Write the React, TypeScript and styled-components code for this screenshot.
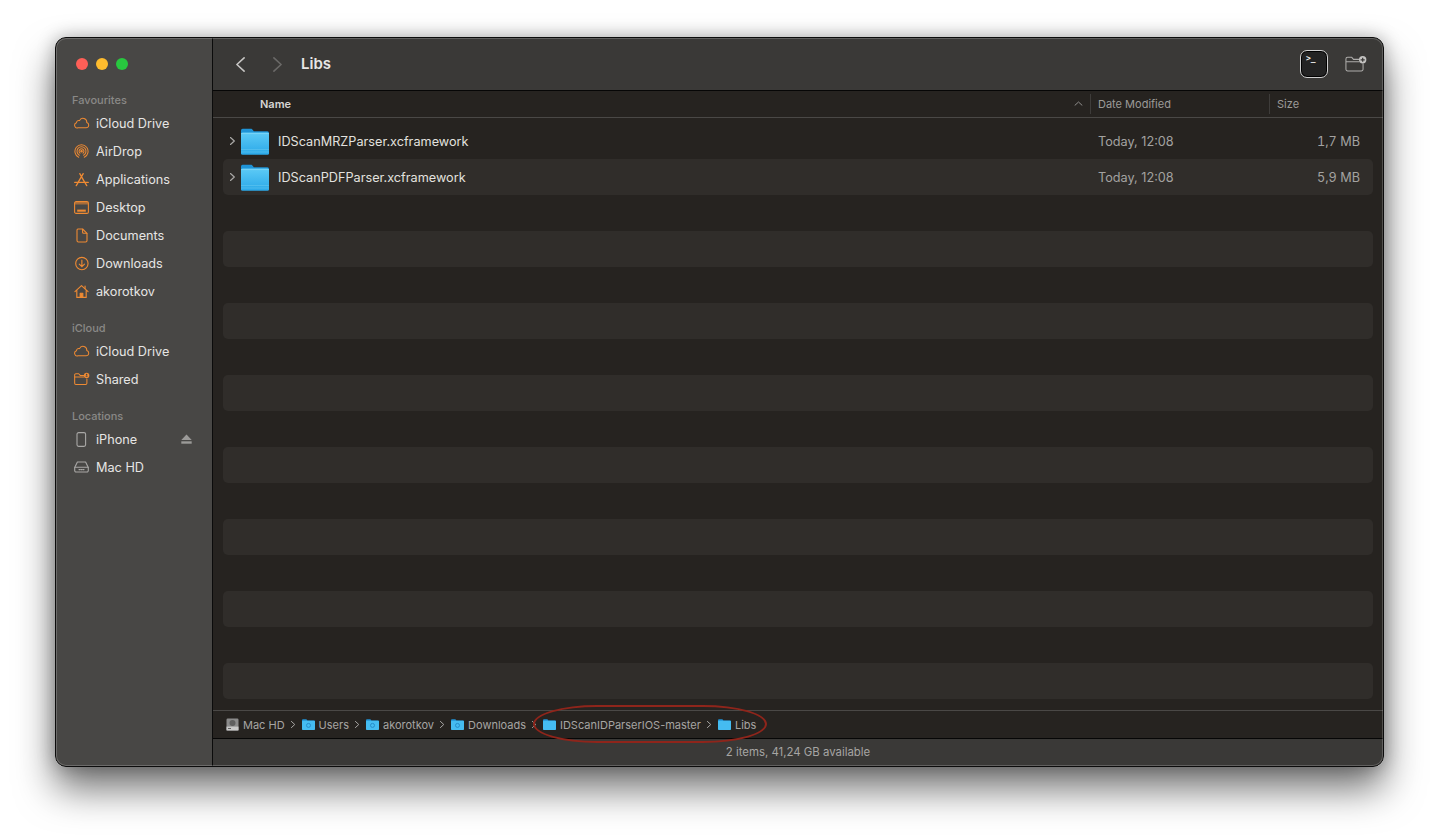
import React from "react";
import styled, { createGlobalStyle } from "styled-components";

const Global = createGlobalStyle`
  html, body { margin: 0; padding: 0; background: #fff; height: 100%; overflow: hidden; }
  body { font-family: Inter, "Noto Sans", "Liberation Sans", sans-serif; -webkit-font-smoothing: antialiased; }
`;

const Page = styled.div`
  width: 1439px;
  height: 840px;
  padding: 37px 0 0 55px;
  box-sizing: border-box;
`;
const Win = styled.div`
  position: relative;
  width: 1329px;
  height: 730px;
  box-sizing: border-box;
  border: 1px solid #0c0c0c;
  border-radius: 11px;
  display: flex;
  overflow: hidden;
  background: #3a3937;
`;
const WinShadow = styled.div`
  width: 1329px;
  height: 730px;
  border-radius: 11px;
  box-shadow: 0 22px 38px rgba(0, 0, 0, 0.55), 0 0 18px rgba(0, 0, 0, 0.28);
`;
const Rim = styled.div`
  position: absolute;
  inset: 0;
  border-radius: 10px;
  box-shadow: inset 0 0 0 1px rgba(255, 255, 255, 0.2);
  pointer-events: none;
  z-index: 3;
`;
const Sidebar = styled.aside`
  width: 156px;
  flex: none;
  background: #484745;
  border-right: 1px solid #0b0b0b;
  padding: 20px 0 0 0;
  box-sizing: content-box;
`;
const Lights = styled.div`
  display: flex;
  gap: 8px;
  padding-left: 20px;
  height: 12px;
`;
const Light = styled.span<{ $c: string }>`
  width: 12px;
  height: 12px;
  border-radius: 50%;
  background: ${(p) => p.$c};
`;
const Section = styled.section<{ $top: number }>`
  margin-top: ${(p) => p.$top}px;
`;
const SectionTitle = styled.div`
  height: 14px;
  line-height: 14px;
  padding-left: 16px;
  font-size: 11px;
  font-weight: 500;
  color: #8a8987;
  margin-bottom: 2px;
`;
const Item = styled.div`
  height: 28px;
  display: flex;
  align-items: center;
  position: relative;
  font-size: 12.7px;
  color: #e6e5e4;
  font-weight: 400;
`;
const ItemIcon = styled.span`
  width: 40px;
  padding-left: 18px;
  box-sizing: border-box;
  height: 28px;
  flex: none;
  display: flex;
  align-items: center;
  color: #ee8a33;
`;
const GreyIcon = styled(ItemIcon)`
  color: #a9a8a6;
`;
const Eject = styled.span`
  margin-left: auto;
  margin-right: 20px;
  display: flex;
  color: #9b9a98;
`;
const Main = styled.main`
  flex: 1;
  min-width: 0;
  display: flex;
  flex-direction: column;
`;
const Toolbar = styled.header`
  height: 52px;
  flex: none;
  background: #3a3937;
  border-bottom: 1px solid #060606;
  display: flex;
  align-items: center;
  padding: 0 16px 0 23px;
`;
const NavBtn = styled.span<{ $w: number }>`
  width: ${(p) => p.$w}px;
  display: flex;
  flex: none;
`;
const Title = styled.h1`
  margin: 0 0 2px;
  font-size: 15px;
  font-weight: 600;
  color: #e8e7e6;
  flex: 1;
`;
const Terminal = styled.div`
  width: 28px;
  height: 28px;
  box-sizing: border-box;
  border: 1px solid #cfcfcf;
  border-radius: 7px;
  background: #232323;
  box-shadow: inset 0 0 0 1px #000;
  font-family: "DejaVu Sans Mono", monospace;
  font-size: 8px;
  font-weight: 700;
  line-height: 10px;
  color: #f2f2f2;
  padding: 3px 0 0 5px;
  margin-right: 17px;
`;
const Header = styled.div`
  height: 25px;
  padding-bottom: 1px;
  flex: none;
  box-sizing: content-box;
  background: #262320;
  border-bottom: 1px solid #4a4846;
  display: grid;
  grid-template-columns: 877px 179px 1fr;
  align-items: center;
  font-size: 11px;
  color: #9c9a98;
`;
const HeadCell = styled.div<{ $sep?: boolean }>`
  height: 20px;
  line-height: 20px;
  padding-left: 7px;
  border-left: ${(p) => (p.$sep ? "1px solid #3e3c3a" : "0")};
`;
const NameHead = styled.div`
  display: flex;
  align-items: center;
  justify-content: space-between;
  padding: 0 7px 0 47px;
  font-weight: 600;
  color: #d6d5d3;
`;
const List = styled.div`
  flex: 1;
  background: #262320;
  padding: 5px 10px 0;
  overflow: hidden;
`;
const Row = styled.div<{ $alt: boolean }>`
  height: 36px;
  border-radius: 5px;
  background: ${(p) => (p.$alt ? "#302d2a" : "transparent")};
  display: grid;
  grid-template-columns: 875px 1fr auto;
  align-items: center;
  padding-right: 13px;
  font-size: 12.7px;
  color: #e2e1df;
`;
const NameCell = styled.div`
  display: flex;
  align-items: center;
`;
const Caret = styled.span`
  width: 18px;
  padding-left: 7px;
  box-sizing: border-box;
  flex: none;
  display: flex;
`;
const FolderWrap = styled.span`
  width: 37px;
  flex: none;
  display: flex;
`;
const Dim = styled.div`
  color: #a3a2a0;
`;
const SizeText = styled(Dim)`
  font-variant-numeric: tabular-nums;
`;
const PathBar = styled.div`
  height: 29px;
  flex: none;
  position: relative;
  box-sizing: border-box;
  background: #262320;
  border-top: 1px solid #4a4846;
  border-bottom: 1px solid #060606;
  display: flex;
  align-items: center;
  padding-left: 13px;
  font-size: 11px;
  color: #a6a5a3;
`;
const Crumb = styled.span`
  display: flex;
  align-items: center;
  gap: 4px;
`;
const Sep = styled.span`
  display: flex;
  width: 17px;
  justify-content: center;
`;
const Circle = styled.div`
  position: absolute;
  left: 320px;
  top: -6px;
  width: 234px;
  height: 38px;
  box-sizing: border-box;
  border: 2px solid #8f251b;
  border-radius: 64px / 19px;
  pointer-events: none;
`;
const Status = styled.footer`
  flex: none;
  height: 27px;
  padding-bottom: 2px;
  box-sizing: border-box;
  background: #3a3937;
  display: flex;
  align-items: center;
  justify-content: center;
  font-size: 11.4px;
  color: #a6a5a3;
`;

const S = { fill: "none", stroke: "currentColor", strokeWidth: 1.1, strokeLinecap: "round", strokeLinejoin: "round" } as const;

const Cloud = () => (
  <svg width="16" height="12" viewBox="0 0 18 14" {...S} strokeWidth="1.2">
    <path d="M4.4 12.6h9.3a3.1 3.1 0 0 0 .8-6.1 4.4 4.4 0 0 0-8.4-2.3 2.6 2.6 0 0 0-3.5 2.5 2.9 2.9 0 0 0 1.8 5.9z" />
  </svg>
);
const AirDrop = () => (
  <svg width="15" height="15" viewBox="0 0 16 16" {...S}>
    <path d="M5 14.2a7 7 0 1 1 6 0" />
    <path d="M5.7 12a4.8 4.8 0 1 1 4.6 0" />
    <path d="M6.4 9.8a2.6 2.6 0 1 1 3.2 0" />
    <circle cx="8" cy="7.7" r=".8" fill="currentColor" />
  </svg>
);
const Apps = () => (
  <svg width="15" height="15" viewBox="0 0 16 15" {...S} strokeWidth="1.4">
    <path d="M6.2 1.2l5.2 9.4M9.8 1.2L4.4 10.6" />
    <path d="M.8 10.6h14.4" />
    <path d="M2.4 14l1.6-2.6M13.6 14l-1.6-2.6" />
  </svg>
);
const Desktop = () => (
  <svg width="15" height="13" viewBox="0 0 15 13">
    <rect x=".6" y=".6" width="13.8" height="11.8" rx="1.5" fill="none" stroke="currentColor" strokeWidth="1.1" />
    <path d="M.6 2.2a1.5 1.5 0 0 1 1.5-1.5h10.8a1.5 1.5 0 0 1 1.5 1.5v1.3H.6z" fill="currentColor" opacity=".55" />
    <rect x="3.2" y="8.6" width="8.6" height="2.1" fill="currentColor" />
  </svg>
);
const Doc = () => (
  <svg width="15" height="15" viewBox="0 0 15 15" {...S}>
    <path d="M4 1h4.6L13 5.4v7.2a1.4 1.4 0 0 1-1.4 1.4H4.4A1.4 1.4 0 0 1 3 12.6V2.2A1.2 1.2 0 0 1 4 1z" />
    <path d="M8.6 1.2v3a1 1 0 0 0 1 1h3.2" />
  </svg>
);
const Down = () => (
  <svg width="15" height="15" viewBox="0 0 16 16" {...S} strokeWidth="1.2">
    <circle cx="8.4" cy="8" r="6.6" />
    <path d="M8.4 4.4v7M5.6 8.6l2.8 2.8 2.8-2.8" />
  </svg>
);
const Home = () => (
  <svg width="15" height="15" viewBox="0 0 16 15" {...S} strokeWidth="1.2">
    <path d="M1 7.6L8 1.2l7 6.4M3 6.2v7.6h10V6.2" />
    <path d="M6.6 13.5V9.4h2.8v4.1z" fill="currentColor" />
    <path d="M11.8 1.6v2.8" />
  </svg>
);
const Shared = () => (
  <svg width="16" height="14" viewBox="0 0 17 14">
    <g {...S}>
      <path d="M10.4 3.2H6.6L5 1.4H2A1.3 1.3 0 0 0 .7 2.7v8.8a1.3 1.3 0 0 0 1.3 1.3h10.4a1.3 1.3 0 0 0 1.3-1.3V7" />
      <path d="M.8 4.9h9.6" />
    </g>
    <circle cx="13.4" cy="3.2" r="2.9" fill="currentColor" />
    <circle cx="13.4" cy="2.3" r=".8" fill="#484745" />
    <rect x="12.3" y="3.4" width="2.2" height="1.2" rx=".5" fill="#484745" />
  </svg>
);
const Phone = () => (
  <svg width="15" height="15" viewBox="0 0 15 15" {...S}>
    <rect x="3" y=".6" width="8.6" height="13.8" rx="1.6" />
  </svg>
);
const Disk = () => (
  <svg width="15" height="12" viewBox="0 0 15 12" {...S}>
    <path d="M3.4 1h8.2l2.7 5.4v3.2a1.4 1.4 0 0 1-1.4 1.4H2.1A1.4 1.4 0 0 1 .7 9.6V6.4z" />
    <path d="M.9 6.2h13.2" />
    <path d="M5 8.6h5" strokeDasharray="1 1" />
  </svg>
);
const EjectIcon = () => (
  <svg width="11" height="10" viewBox="0 0 11 10" fill="currentColor">
    <path d="M5.5 .4L10.7 6H.3z" />
    <rect x=".3" y="7.3" width="10.4" height="2.4" />
  </svg>
);
const Chevron = ({ dir, size, color, w = 1.6 }: { dir: "l" | "r"; size: number; color: string; w?: number }) => (
  <svg width={size * 0.6} height={size} viewBox="0 0 6 10" fill="none" stroke={color} strokeWidth={w} strokeLinecap="round" strokeLinejoin="round">
    <path d={dir === "l" ? "M5.4 .6L.6 5l4.8 4.4" : "M.6 .6L5.4 5 .6 9.4"} vectorEffect="non-scaling-stroke" />
  </svg>
);
const NewFolder = () => (
  <svg width="22" height="16" viewBox="0 0 23 17">
    <g fill="none" stroke="#aeadab" strokeWidth="1.1" strokeLinejoin="round">
      <path d="M15.4 3.6H8.8L7 1.4H2.6A1.8 1.8 0 0 0 .8 3.2v10.9a1.8 1.8 0 0 0 1.8 1.8h14.6a1.8 1.8 0 0 0 1.8-1.8V8" />
      <path d="M.9 6.2h14.4" />
    </g>
    <circle cx="18.6" cy="4" r="3.9" fill="#c4c3c1" />
    <path d="M18.6 1.8v4.4M16.4 4h4.4" stroke="#3a3937" strokeWidth="1.3" />
  </svg>
);
const BigFolder = ({ id }: { id: string }) => (
  <svg width="28" height="27" viewBox="0 0 28 27">
    <defs>
      <linearGradient id={id} x1="0" y1="0" x2="0" y2="1">
        <stop offset="0" stopColor="#5ccaf6" />
        <stop offset="1" stopColor="#2aa8e8" />
      </linearGradient>
    </defs>
    <path d="M0 2.4A1.6 1.6 0 0 1 1.6.8h8.2c.9 0 1.4.5 2 1.2l1 1.2H26.4A1.6 1.6 0 0 1 28 4.8v5H0z" fill="#1f93d6" />
    <rect x="0" y="4.6" width="28" height="22.2" rx="1.5" fill={`url(#${id})`} />
    <path d="M0 5.6h28" stroke="#86daf9" strokeWidth=".7" />
    <path d="M0 21.5h28M0 24h28" stroke="#6bcbf2" strokeWidth=".7" opacity=".7" />
  </svg>
);
const TinyFolder = ({ glyph }: { glyph?: boolean }) => (
  <svg width="13" height="11" viewBox="0 0 13 11">
    <path d="M0 1.2A1 1 0 0 1 1 .2h3.4l1 1.2H12a1 1 0 0 1 1 1V4H0z" fill="#1f93d6" />
    <rect y="1.8" width="13" height="9.2" rx=".8" fill="#45bcf1" />
    {glyph && <circle cx="6.5" cy="6.4" r="2" fill="none" stroke="#2288c6" strokeWidth=".9" />}
  </svg>
);
const TinyDisk = () => (
  <svg width="13" height="13" viewBox="0 0 13 13">
    <rect x=".5" y=".5" width="12" height="12" rx="1.2" fill="#8b8b8b" />
    <rect x=".5" y="8.6" width="12" height="3.9" fill="#c8c8c8" />
    <circle cx="6.5" cy="5" r="3" fill="#5f5f5f" />
    <path d="M2 10.5h3" stroke="#555" strokeWidth=".9" />
  </svg>
);
const SmallSep = () => (
  <Sep>
    <Chevron dir="r" size={7} color="#a6a5a3" w={1} />
  </Sep>
);

const favourites: [React.ReactNode, string][] = [
  [<Cloud />, "iCloud Drive"],
  [<AirDrop />, "AirDrop"],
  [<Apps />, "Applications"],
  [<Desktop />, "Desktop"],
  [<Doc />, "Documents"],
  [<Down />, "Downloads"],
  [<Home />, "akorotkov"],
];

const rows = [
  { name: "IDScanMRZParser.xcframework", size: "1,7 MB" },
  { name: "IDScanPDFParser.xcframework", size: "5,9 MB" },
];
const rowCount = 16;

export default function App() {
  return (
    <Page>
      <Global />
      <WinShadow>
        <Win>
          <Rim />
          <Sidebar>
            <Lights>
              <Light $c="#fe5f57" />
              <Light $c="#febc2e" />
              <Light $c="#28c83f" />
            </Lights>
            <Section $top={23}>
              <SectionTitle>Favourites</SectionTitle>
              {favourites.map(([icon, label]) => (
                <Item key={label}>
                  <ItemIcon>{icon}</ItemIcon>
                  {label}
                </Item>
              ))}
            </Section>
            <Section $top={16}>
              <SectionTitle>iCloud</SectionTitle>
              <Item>
                <ItemIcon><Cloud /></ItemIcon>
                iCloud Drive
              </Item>
              <Item>
                <ItemIcon><Shared /></ItemIcon>
                Shared
              </Item>
            </Section>
            <Section $top={16}>
              <SectionTitle>Locations</SectionTitle>
              <Item>
                <GreyIcon><Phone /></GreyIcon>
                iPhone
                <Eject><EjectIcon /></Eject>
              </Item>
              <Item>
                <GreyIcon><Disk /></GreyIcon>
                Mac HD
              </Item>
            </Section>
          </Sidebar>
          <Main>
            <Toolbar>
              <NavBtn $w={37}><Chevron dir="l" size={15} color="#c6c5c3" /></NavBtn>
              <NavBtn $w={28}><Chevron dir="r" size={15} color="#6a6967" /></NavBtn>
              <Title>Libs</Title>
              <Terminal>&gt;_</Terminal>
              <NewFolder />
            </Toolbar>
            <Header>
              <NameHead>
                Name
                <svg width="9" height="5" viewBox="0 0 9 5" fill="none" stroke="#8f8e8c" strokeWidth="1">
                  <path d="M.7 4.5L4.5 1l3.8 3.5" />
                </svg>
              </NameHead>
              <HeadCell $sep>Date Modified</HeadCell>
              <HeadCell $sep>Size</HeadCell>
            </Header>
            <List>
              {Array.from({ length: rowCount }, (_, i) => {
                const r = rows[i];
                return (
                  <Row key={i} $alt={i % 2 === 1}>
                    {r && (
                      <>
                        <NameCell>
                          <Caret><Chevron dir="r" size={8} color="#a8a7a5" w={1.2} /></Caret>
                          <FolderWrap><BigFolder id={`f${i}`} /></FolderWrap>
                          {r.name}
                        </NameCell>
                        <Dim>Today, 12:08</Dim>
                        <SizeText>{r.size}</SizeText>
                      </>
                    )}
                  </Row>
                );
              })}
            </List>
            <PathBar>
              <Crumb><TinyDisk />Mac HD</Crumb>
              <SmallSep />
              <Crumb><TinyFolder glyph />Users</Crumb>
              <SmallSep />
              <Crumb><TinyFolder glyph />akorotkov</Crumb>
              <SmallSep />
              <Crumb><TinyFolder glyph />Downloads</Crumb>
              <SmallSep />
              <Crumb><TinyFolder />IDScanIDParserIOS-master</Crumb>
              <SmallSep />
              <Crumb><TinyFolder />Libs</Crumb>
              <Circle />
            </PathBar>
            <Status>2 items, 41,24 GB available</Status>
          </Main>
        </Win>
      </WinShadow>
    </Page>
  );
}
